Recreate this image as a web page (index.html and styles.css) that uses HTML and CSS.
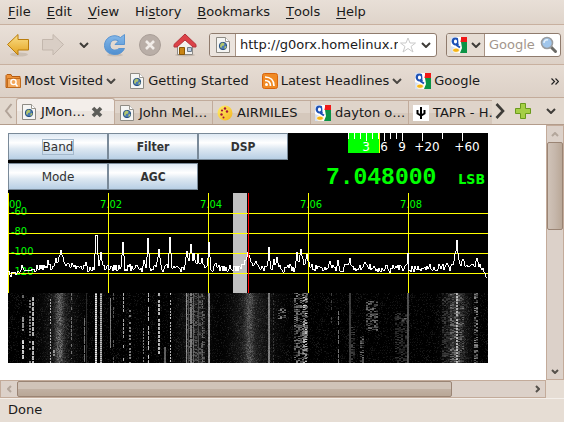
FILE: index.html
```html
<!DOCTYPE html>
<html lang="en">
<head>
<meta charset="utf-8">
<title>JMonitor</title>
<link rel="stylesheet" href="styles.css">
</head>
<body>
<svg class="defs" aria-hidden="true">
  <defs>
    <linearGradient id="gold" x1="0" y1="0" x2="0" y2="1"><stop offset="0" stop-color="#fbe08a"/><stop offset="1" stop-color="#e3a21f"/></linearGradient>
    <linearGradient id="blue" x1="0" y1="0" x2="0" y2="1"><stop offset="0" stop-color="#86b9ea"/><stop offset="1" stop-color="#4f8fd0"/></linearGradient>
    <linearGradient id="sun" x1="0" y1="0" x2="1" y2="1"><stop offset="0" stop-color="#fff06a"/><stop offset="1" stop-color="#f5b21e"/></linearGradient>
  </defs>
  <symbol id="page" viewBox="0 0 16 16">
    <path d="M1.5.5h9l4 4v11h-13z" fill="#f5f5f3" stroke="#8e8b84"/>
    <path d="M10.500.5v4h4" fill="#fff" stroke="#9a978f"/>
    <circle cx="8" cy="9" r="3.700" fill="#4a7ab2" stroke="#27507f"/>
    <path d="M5.500 7l2-1.500 2 1-.5 2-2 .5-.5 2-1.500-1zM9.500 9.500l2-.5-.5 2-1.500 1z" fill="#b4c66b"/>
  </symbol>
  <symbol id="google" viewBox="0 0 16 16">
    <path d="M0 0h16v16H0z" fill="#fff"/>
    <path d="M8 0h8v5H9z" fill="#f01818"/><path d="M10 5h6v11H9l2-5z" fill="#0a9345"/>
    <path d="M0 0h4L0 6zM0 9l5 2-2 5H0z" fill="#d4e0f4"/>
    <ellipse cx="4.500" cy="4.500" rx="2.700" ry="3" fill="#fff" stroke="#1d51b5" stroke-width="2.200"/>
    <path d="M7 6.500L6 8.500l3 2" fill="none" stroke="#1d51b5" stroke-width="2"/>
    <ellipse cx="5" cy="13.200" rx="3.400" ry="2.200" fill="#f6b414" stroke="#fff" stroke-width=".8"/>
    <path d="M7 0h3v2L9 7H7.500z" fill="#fff"/>
  </symbol>
  <symbol id="down" viewBox="0 0 10 6"><path d="M1 1l4 4 4-4" fill="none" stroke="currentColor" stroke-width="2"/></symbol>
</svg>

<nav class="menubar">
  <button><u>F</u>ile</button><button><u>E</u>dit</button><button><u>V</u>iew</button><button>Hi<u>s</u>tory</button><button><u>B</u>ookmarks</button><button><u>T</u>ools</button><button><u>H</u>elp</button>
</nav>

<div class="toolbar">
  <button class="tool" aria-label="Back"><svg width="24" height="24" viewBox="0 0 24 24"><ellipse cx="13" cy="21.500" rx="9" ry="2" fill="#cbbfb3"/><path d="M1.500 11.500L12 1.500v5h10.500v10.500H12v5z" fill="url(#gold)" stroke="#b97c0c" stroke-linejoin="round"/></svg></button>
  <button class="tool" aria-label="Forward"><svg width="24" height="24" viewBox="0 0 24 24"><path d="M22.500 11.500L12 1.500v5H1.500v10.500H12v5z" fill="#d9cec5" stroke="#c3b7ad" stroke-linejoin="round"/></svg></button>
  <button class="drop recent" aria-label="Recent pages"><svg width="10" height="6"><use href="#down"/></svg></button>
  <button class="tool" aria-label="Reload"><svg width="24" height="24" viewBox="0 0 24 24"><ellipse cx="12" cy="22" rx="8" ry="1.500" fill="#cbbfb3"/><path d="M17.500 4.500L21.500 1.500v10h-9.500l3.500-3.500C11 5.500 7 8 7 12.500c0 4.500 5.500 6 9 3h5.500c-2 4-5 6-9.500 6C5.500 21.500 1.500 17.500 1.500 12.500 1.500 4.500 10.500 0 17.500 4.500z" fill="url(#blue)" stroke="#5a94d0"/></svg></button>
  <button class="tool" aria-label="Stop"><svg width="24" height="24" viewBox="0 0 24 24"><circle cx="12" cy="12" r="10.500" fill="#b9aea7" stroke="#a99e97"/><path d="M8 8l8 8M16 8l-8 8" stroke="#f1ece8" stroke-width="2.600"/></svg></button>
  <button class="tool" aria-label="Home"><svg width="24" height="24" viewBox="0 0 24 24"><ellipse cx="12" cy="22" rx="10" ry="1.500" fill="#c4b8ad"/><path d="M4.500 11L12 4l7.500 7v10.500h-15z" fill="#f3f2ef" stroke="#8d8a86"/><path d="M6.500 14.500h5v7h-5z" fill="#c88414" stroke="#8a5606"/><path d="M14.500 14.500h4v4h-4z" fill="#b9cbe0" stroke="#6e7b8b"/><path d="M12 1L1 11.500v2.500h3L12 7l8 7h3v-2.500z" fill="#dc4248" stroke="#b3333a" stroke-linejoin="round"/></svg></button>
  <div class="field address">
    <span class="identity"><svg width="16" height="16"><use href="#page"/></svg></span>
    <input class="url" aria-label="Address" value="http://g0orx.homelinux.net/">
    <button aria-label="Bookmark this page"><svg width="16" height="16" viewBox="0 0 16 16"><path d="M8 1l2 5h5.500l-4.500 3.500 2 5.500-5-3.500L3 15l2-5.500L.5 6H6z" fill="#fff" stroke="#c9c9c9"/></svg></button>
    <button class="drop past" aria-label="Show history"><svg width="10" height="6"><use href="#down"/></svg></button>
  </div>
  <div class="field search">
    <button class="engine" aria-label="Search engine"><svg width="16" height="16"><use href="#google"/></svg><svg width="10" height="6"><use href="#down"/></svg></button>
    <input class="query" aria-label="Search" placeholder="Google">
    <button class="go" aria-label="Search now"><svg width="18" height="18" viewBox="0 0 18 18"><path d="M11 11l4.500 4.500" stroke="#6a6a66" stroke-width="3" stroke-linecap="round"/><circle cx="7" cy="7" r="5.500" fill="#a0c6ec" stroke="#9a9da0" stroke-width="1.600"/><path d="M4 7a3 3 0 0 1 4-3" fill="none" stroke="#e6f2fc" stroke-width="1.500"/></svg></button>
  </div>
</div>

<div class="bookmarks">
  <button class="mark"><svg width="16" height="16" viewBox="0 0 16 16"><path d="M1 14.500V2.500L2 1.500h4l1 2h8v11z" fill="#ee9238" stroke="#b65c12"/><path d="M2.500 14.500v-9h13v9z" fill="#f3a85c" stroke="#c06a1c"/><circle cx="8.500" cy="9" r="2.600" fill="none" stroke="#fff" stroke-width="1.400"/><path d="M10.500 11l2 2.500" stroke="#fff" stroke-width="1.500"/></svg>Most Visited<svg class="caret" width="10" height="6"><use href="#down"/></svg></button>
  <a class="mark" href="#start"><svg width="16" height="16"><use href="#page"/></svg>Getting Started</a>
  <button class="mark"><svg width="16" height="16" viewBox="0 0 16 16"><rect x=".5" y=".5" width="15" height="15" rx="2" fill="#f08a24" stroke="#d8640c"/><circle cx="4.500" cy="11.500" r="1.500" fill="#fff"/><path d="M3 7.500c3.500 0 5.500 2 5.500 5.500M3 4c5.500 0 9 3.500 9 9" fill="none" stroke="#fff" stroke-width="1.700"/></svg>Latest Headlines<svg class="caret" width="10" height="6"><use href="#down"/></svg></button>
  <a class="mark" href="#google-home"><svg width="16" height="16"><use href="#google"/></svg>Google</a>
  <button class="more" aria-label="More bookmarks"><svg width="8" height="7" viewBox="0 0 8 7"><path d="M.5.5l3 3-3 3M4.500.5l3 3-3 3" fill="none" stroke="#222" stroke-width="1.200"/></svg></button>
</div>

<div class="tabstrip">
  <button class="shift left" aria-label="Scroll tabs left"><svg width="9" height="16" viewBox="0 0 9 16"><path d="M7.500 1L2 8l5.500 7" fill="none" stroke="#b1a398" stroke-width="2"/></svg></button>
  <div class="tabs" role="tablist">
    <button class="tab active" role="tab" aria-selected="true"><svg width="16" height="16"><use href="#page"/></svg><span>JMon…</span><svg class="close" width="12" height="12" viewBox="0 0 12 12"><path d="M2 2l8 8M10 2l-8 8" stroke="#5c5c58" stroke-width="3.600"/></svg></button>
    <button class="tab" role="tab"><svg width="16" height="16"><use href="#page"/></svg><span>John Mel…</span></button>
    <button class="tab" role="tab"><svg width="16" height="16" viewBox="0 0 16 16"><circle cx="8" cy="8" r="7.500" fill="url(#sun)"/><g fill="#a3123d"><circle cx="8" cy="3.500" r="1.200"/><circle cx="5" cy="5.500" r="1.100"/><circle cx="10" cy="6.500" r="1.200"/><circle cx="4.500" cy="9.500" r="1.200"/><circle cx="6.500" cy="12.500" r="1"/></g></svg><span>AIRMILES</span></button>
    <button class="tab" role="tab"><svg width="16" height="16"><use href="#google"/></svg><span>dayton o…</span></button>
    <button class="tab" role="tab"><svg width="16" height="16" viewBox="0 0 16 16"><path d="M0 0h16v16H0z" fill="#fff"/><path d="M8 2v12M4.500 5v3.500L8 10.500l3.500-2V5" fill="none" stroke="#000" stroke-width="2"/></svg><span>TAPR - H…</span></button>
  </div>
  <button class="shift" aria-label="Scroll tabs right"><svg width="10" height="16" viewBox="0 0 10 16"><path d="M1.500 1L8 8l-6.500 7" fill="none" stroke="#3e3c38" stroke-width="2.600"/></svg></button>
  <button class="newtab" aria-label="New tab"><svg width="16" height="16" viewBox="0 0 16 16"><path d="M5.500.5h5v5h5v5h-5v5h-5v-5h-5v-5h5z" fill="#a5cf46" stroke="#6a9a1c"/></svg></button>
  <button class="drop" aria-label="List all tabs"><svg width="10" height="6"><use href="#down"/></svg></button>
</div>

<div class="viewport">
  <main class="document">
    <section class="radio">
      <div class="controls">
        <div class="keys">
          <button class="key plain focused"><span>Band</span></button><button class="key"><span>Filter</span></button><button class="key"><span>DSP</span></button>
          <button class="key plain"><span>Mode</span></button><button class="key"><span>AGC</span></button>
        </div>
        <div class="readout">
          <svg class="meter" width="140" height="22" viewBox="0 0 140 22">
            <path d="M0 0h32v20H0z" fill="#0f0"/><path d="M31 0h1v20h-1z" fill="#ff0"/>
            <path d="M.5 0v6M6.500 0v6M12.500 0v6M18.500 0v8M24.500 0v6M30.500 0v6M36.500 0v8M42.500 0v6M48.500 0v6M54.500 0v8M74.500 0v8M94.500 0v6M114.500 0v8" stroke="#fff"/>
            <g fill="#fff" text-anchor="middle"><text x="18" y="18">3</text><text x="36" y="18">6</text><text x="54" y="18">9</text><text x="79" y="18">+20</text><text x="119" y="18">+60</text></g>
          </svg>
          <div class="tuning"><output class="frequency">7.048000</output><span class="mode">LSB</span></div>
        </div>
      </div>
      <svg class="spectrum" width="480" height="100" viewBox="0 0 480 100">
        <path d="M225 0h14v100h-14z" fill="#c0c0c0"/>
        <g fill="#0f0"><text x="1" y="15">00</text><text x="92" y="15">7.02</text><text x="192" y="15">7.04</text><text x="292" y="15">7.06</text><text x="392" y="15">7.08</text><text x="3" y="22">-60</text><text x="3" y="42">-80</text><text x="3" y="62">-100</text><text x="3" y="82">-120</text></g>
        <path d="M0 20.500h480M0 40.500h480M0 60.500h480M0 80.500h480M.5 0v100M100.500 0v100M200.500 0v100M300.500 0v100M400.500 0v100" stroke="#ff0"/>
        <polyline id="trace" fill="none" stroke="#fff"/>
        <path d="M240.500 0v100" stroke="#f00"/>
      </svg>
      <canvas id="waterfall" class="waterfall" width="480" height="70"></canvas>
    </section>
  </main>
  <div class="scroll vertical">
    <button aria-label="Scroll up"><svg class="dim" width="8" height="5" viewBox="0 0 8 5"><path d="M1 4l3-3 3 3" fill="none" stroke="currentColor" stroke-width="2"/></svg></button>
    <div class="track"><div class="thumb"></div></div>
    <button aria-label="Scroll down"><svg width="8" height="5" viewBox="0 0 8 5"><path d="M1 1l3 3 3-3" fill="none" stroke="currentColor" stroke-width="2"/></svg></button>
  </div>
  <div class="scroll horizontal">
    <button aria-label="Scroll left"><svg class="dim" width="5" height="8" viewBox="0 0 5 8"><path d="M4 1L1 4l3 3" fill="none" stroke="currentColor" stroke-width="2"/></svg></button>
    <div class="track"><div class="thumb"></div></div>
    <button aria-label="Scroll right"><svg width="5" height="8" viewBox="0 0 5 8"><path d="M1 1l3 3-3 3" fill="none" stroke="currentColor" stroke-width="2"/></svg></button>
  </div>
</div>
<footer class="status">Done</footer>
<script src="radio.js"></script>
</body>
</html>
```
FILE: styles.css
```css
* { box-sizing: border-box; }
html, body { height: 100%; }
body {
  margin: 0;
  display: flex;
  flex-direction: column;
  overflow: hidden;
  background: #e6ddd4;
  color: #1a1a1a;
  font: 13px/16px "DejaVu Sans", sans-serif;
}
button, input { font: inherit; color: inherit; border: 0; padding: 0; margin: 0; background: none; }
button { display: flex; align-items: center; justify-content: center; white-space: nowrap; }
a { color: inherit; text-decoration: none; }
svg { display: block; flex: none; }
.defs { position: absolute; width: 0; height: 0; }
.menubar, .toolbar, .bookmarks, .tabstrip { display: flex; align-items: center; flex: none; }

.menubar {
  height: 25px;
  padding: 0 8px;
  gap: 16px;
  background: linear-gradient(#e8dfd7, #dfd4ca);
  border-bottom: 1px solid #c8b09f;
}
.menubar u { text-underline-offset: 2px; }

.toolbar {
  height: 40px;
  padding: 0 3px 0 6px;
  background: linear-gradient(#e9e0d8, #ddd1c7);
  border-bottom: 1px solid #c8b09f;
}
.tool { width: 35px; flex: none; justify-content: flex-start; }
.drop { width: 24px; flex: none; color: #3e3c38; }
.recent { width: 16px; margin-right: 11px; }
.past { width: 20px; }
.field {
  display: flex;
  align-items: center;
  height: 24px;
  background: #fff;
  border: 1px solid #8f7b6d;
  border-radius: 3px;
  overflow: hidden;
}
.address { flex: 2 1 0; min-width: 0; margin-left: 1px; }
.identity { display: flex; align-items: center; justify-content: center; width: 26px; height: 100%; flex: none; background: #ebe4de; border-right: 1px solid #a89384; }
.url { flex: 1; min-width: 0; margin: 0 2px 0 4px; outline: 0; }
.search { flex: 1 1 0; min-width: 0; margin-left: 9px; }
.engine { width: 38px; height: 100%; flex: none; gap: 4px; background: #e6ddd4; border-right: 1px solid #a89384; color: #3e3c38; }
.query { flex: 1; min-width: 0; margin-left: 4px; outline: 0; }
.query::placeholder { color: #a2968c; opacity: 1; }
.go { margin-right: 2px; }

.bookmarks {
  height: 33px;
  padding: 0 5px;
  gap: 13px;
  background: linear-gradient(#e6dcd3, #dcd0c6);
  border-bottom: 1px solid #c3ab9a;
}
.mark { display: flex; align-items: center; gap: 3px; white-space: nowrap; }
.caret { color: #4a4743; }
.more { margin-left: auto; }

.tabstrip {
  height: 27px;
  padding-right: 1px;
  background: #e2d8ce;
  border-bottom: 1px solid #b39c8b;
}
.shift { width: 15px; flex: none; }
.left { width: 16px; }
.tabs { display: flex; align-items: flex-end; flex: 1; min-width: 0; height: 100%; overflow: hidden; }
.tab {
  flex: none;
  width: 98px;
  height: 24px;
  padding-left: 4px;
  gap: 4px;
  justify-content: flex-start;
  background: linear-gradient(#dfd4ca 50%, #d5c8bc 50%);
  border: 1px solid #c1ab9b;
  border-width: 1px 1px 0 0;
}
.tab.active { width: 99px; height: 26px; border-left-width: 1px; background: linear-gradient(#f3eeea 50%, #ebe4de 50%); border-radius: 3px 3px 0 0; }
.close { margin-left: 2px; }
.newtab { width: 32px; flex: none; }

.viewport {
  flex: 1;
  min-height: 0;
  display: grid;
  grid-template: minmax(0, 1fr) 18px / minmax(0, 1fr) 18px;
}
.document { background: #fff; padding: 8px; overflow: hidden; }
.radio { width: max-content; background: #000; }
.controls { display: flex; justify-content: space-between; height: 60px; }
.keys {
  display: grid;
  grid-template-columns: 100px 90px 90px;
  grid-auto-rows: 27px;
  row-gap: 3px;
}
.key {
  border: 1px solid #7a8a99;
  background: linear-gradient(#dde8f3, #fff 35%, #dce7f1 60%, #b8cfe5);
  color: #333;
  font: bold 12px/14px "DejaVu Sans Condensed", "DejaVu Sans", sans-serif;
}
.plain { font: 12px/14px "DejaVu Sans", sans-serif; }
.focused span { outline: 1px solid #a3b8cc; }
.readout { display: flex; flex-direction: column; align-items: flex-end; }
.meter { font: 12px "DejaVu Sans", sans-serif; }
.tuning { display: flex; align-items: baseline; gap: 22px; margin-top: 9px; padding-right: 3px; color: #0f0; }
.frequency { font: bold 23px/28px "Liberation Mono", monospace; }
.mode { font: bold 14px/16px "DejaVu Sans Condensed", "DejaVu Sans", sans-serif; }
.spectrum { font: 11px "DejaVu Sans Condensed", "DejaVu Sans", sans-serif; shape-rendering: crispEdges; }
.waterfall { display: block; }

.scroll { display: flex; background: #dcd1c9; border: 1px solid #c3ab9a; color: #55514b; }
.scroll button { flex: none; width: 16px; height: 16px; }
.dim { color: #b3a69b; }
.track { display: flex; flex: 1; }
.thumb { border: 1px solid #9a8474; border-radius: 2px; }
.vertical, .vertical .track { flex-direction: column; }
.vertical .thumb { height: 40%; background: linear-gradient(90deg, #d0c3b8, #c6b7ab 50%, #b9a797); }
.horizontal .thumb { width: 85%; background: linear-gradient(#d0c3b8 50%, #c1b1a3 50%, #b9a797); }

.status { flex: none; height: 24px; padding: 3px 8px; border-top: 1px solid #f4efea; }
```
FILE: radio.js
```js
// Repeatable noise source for the receiver display.
let seed = 7041;
function noise() {
  seed = (seed * 1103515245 + 12345) % 2147483648;
  return seed / 2147483648;
}

// Signal peaks: [x, y of the tip, half width of the skirt].
const peaks = [
  [40, 67, 2], [48, 65, 4], [53, 57, 6], [60, 70, 3], [64, 70, 2], [78, 69, 2],
  [88, 42, 2], [89, 42, 2], [93, 59, 3], [115, 49, 2], [136, 67, 2], [140, 45, 2],
  [151, 56, 3], [162, 44, 2], [179, 58, 3], [183, 51, 3], [186, 60, 3], [190, 61, 2],
  [194, 65, 4], [201, 49, 2], [240, 59, 6], [248, 68, 5], [261, 54, 2], [266, 66, 2],
  [269, 64, 2], [289, 59, 2], [293, 56, 4], [299, 61, 4], [322, 68, 3], [330, 67, 2],
  [342, 65, 3], [357, 69, 5], [400, 60, 1], [439, 70, 3], [447, 61, 4], [449, 47, 3],
  [455, 66, 6], [469, 65, 4]
];
const points = [];
let ripple = 0;
for (let x = 0; x < 480; x += 1) {
  const floor = x < 10 ? 82 - x / 2 : x > 475 ? 76 + (x - 475) * 2 : 75;
  ripple = ripple * 0.2 + (noise() - 0.5) * 8;
  let y = floor + ripple;
  for (const [px, py, w] of peaks) {
    const d = Math.abs(x - px);
    if (d < w) y = Math.min(y, py + (75 - py) * d / w + (d ? noise() * 4 : 0));
  }
  points.push(x + "," + Math.round(y));
}
document.getElementById("trace").setAttribute("points", points.join(" "));

// Carriers: x, width, level, on-probability, run length, first row, last row.
const carriers = [
  [14, 2, 110, .4, 1, 0, 10], [14, 2, 150, .9, 5, 24, 38], [14, 2, 215, .8, 4, 47, 70],
  [21, 2, 130, .6, 2, 5, 70], [24, 2, 190, .65, 4, 0, 70], [42, 1, 180, .6, 2, 6, 70],
  [63, 1, 120, .6, 3, 0, 66], [76, 1, 120, .8, 8, 17, 70], [78, 1, 45, 1, 1, 0, 70],
  [45, 2, 150, .8, 3, 57, 63], [102, 1, 130, 1, 1, 5, 55], [105, 1, 90, .5, 3, 0, 70],
  [115, 1, 180, .6, 3, 0, 70], [121, 2, 130, .6, 2, 17, 70], [135, 1, 130, .6, 2, 33, 70],
  [140, 1, 200, .6, 4, 0, 70], [150, 2, 190, .7, 3, 0, 70], [156, 2, 100, 1, 1, 54, 70],
  [162, 1, 200, .6, 2, 0, 70], [178, 1, 150, 1, 1, 0, 70], [180, 1, 80, 1, 1, 0, 70],
  [182, 2, 130, .9, 1, 0, 70], [185, 1, 110, 1, 1, 0, 70], [190, 1, 80, 1, 1, 0, 70],
  [194, 1, 110, .7, 2, 0, 70], [200, 2, 155, 1, 1, 0, 70], [260, 2, 130, 1, 1, 0, 70],
  [265, 1, 60, .7, 2, 0, 70], [323, 1, 70, .5, 3, 0, 30], [330, 1, 120, .5, 4, 14, 70],
  [341, 2, 65, 1, 1, 0, 70], [399, 2, 85, 1, 1, 0, 70], [448, 2, 190, .9, 2, 0, 70]
];
// Voice and hash: first x, last x, level, first row, last row.
const bands = [
  [270, 277, 120, 15, 26], [286, 299, 110, 0, 70], [295, 299, 180, 0, 70],
  [343, 346, 60, 32, 70], [352, 355, 100, 43, 70], [358, 369, 95, 8, 38],
  [387, 399, 50, 20, 70], [394, 399, 90, 25, 30], [434, 447, 55, 0, 70],
  [442, 455, 100, 0, 70], [466, 470, 120, 0, 70], [179, 196, 80, 0, 70]
];
// Wide glows: centre, spread, level.
const glows = [[51, 3, 62], [52, 11, 28], [241, 3, 45], [238, 11, 22], [251, 14, 16], [186, 10, 24], [449, 8, 42]];

const ctx = document.getElementById("waterfall").getContext("2d");
const image = ctx.createImageData(480, 70);
const level = new Float32Array(480 * 70);
for (let y = 0; y < 70; y += 1) {
  for (let x = 0; x < 480; x += 1) {
    let v = noise() < .25 ? noise() * 28 : 0;
    for (const [c, s, l] of glows) v += l * Math.exp(-((x - c) ** 2) / (2 * s * s)) * (.4 + noise() * 1.1);
    level[y * 480 + x] = v;
  }
}
for (const [a, b, l, top, end] of bands)
  for (let y = top; y < end; y += 1)
    for (let x = a; x < b; x += 2) {
      const v = noise() < .55 ? l * (.3 + noise() * .9) : 0;
      for (let i = x; i < x + 2; i += 1) level[y * 480 + i] = Math.max(level[y * 480 + i], v);
    }
for (const [c, w, l, chance, run, top, end] of carriers)
  for (let y = top; y < end;) {
    const on = noise() < chance;
    for (let n = 0; n < run && y < end; n += 1, y += 1)
      if (on) for (let i = 0; i < w; i += 1) level[y * 480 + c + i] = l * (.85 + noise() * .2);
    if (run > 1 && on && y < end) y += 1;
  }
// The two keyed carriers near 7.018 alternate line by line.
for (let y = 0; y < 70; y += 1)
  for (const [x, l] of [[87, 235], [88, 235], [92, 190], [93, 190]])
    level[y * 480 + x] = y % 2 ? l : l * .6;
level.forEach((v, i) => {
  image.data.fill(Math.min(255, v), i * 4, i * 4 + 3);
  image.data[i * 4 + 3] = 255;
});
ctx.putImageData(image, 0, 0);
```
